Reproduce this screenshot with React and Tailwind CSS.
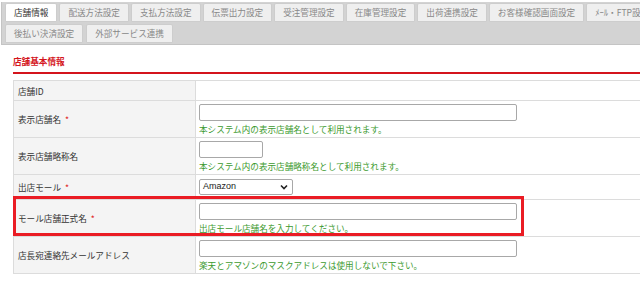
import React from "react";

const topTabs = [
    { label: "店舗情報", active: true },
    { label: "配送方法設定" },
    { label: "支払方法設定" },
    { label: "伝票出力設定" },
    { label: "受注管理設定" },
    { label: "在庫管理設定" },
    { label: "出荷連携設定" },
    { label: "お客様確認画面設定" },
    { label: "ﾒｰﾙ・FTP設定" },
];

const subTabs = ["後払い決済設定", "外部サービス連携"];

const Tab = ({ label, active }) => (
    <div
        className={`shrink-0 whitespace-nowrap px-[8px] h-[19px] leading-[17px] border border-[#cdcdcd] rounded-t-[2px] ${
            active ? "bg-white text-[#333]" : "bg-[#efefef] text-[#888]"
        }`}
    >
        {label}
    </div>
);

const Req = () => <span className="text-[#e02020] ml-[4px]">*</span>;

const Hint = ({ children }) => (
    <div className="text-[#3c9a2e] leading-[12px] mt-[2px] whitespace-nowrap">{children}</div>
);

const TextBox = ({ w }) => (
    <div className={`h-[17px] ${w} border border-[#a8a8a8] rounded-[2px] bg-white`} />
);

export default function App() {
    return (
        <div className="relative w-[640px] h-[281px] overflow-hidden bg-white text-[8.6px] text-[#333] font-['Noto_Sans_CJK_JP','Noto_Sans',sans-serif]">
            {/* ── Tabs ── */}
            <div className="ml-[1px] mt-[2px] border-l border-b border-[#c4c4c4] bg-[#d3d3d3] pl-[3px] pt-px pb-[1px] flex flex-col gap-[2px]">
                <div className="flex gap-[2px] overflow-hidden">
                    {topTabs.map((t) => (
                        <Tab key={t.label} label={t.label} active={t.active} />
                    ))}
                </div>
                <div className="flex gap-[3px]">
                    {subTabs.map((t) => (
                        <Tab key={t} label={t} />
                    ))}
                </div>
            </div>

            {/* ── Section ── */}
            <div className="pl-[13px] mt-[10px]">
                <div className="h-[12px] leading-[12px] font-bold text-[#d4141c]">店舗基本情報</div>
                <div className="mt-[5px] h-[2px] bg-[#d4141c]" />

                <table className="mt-[6px] w-[660px] border-collapse table-fixed">
                    <colgroup>
                        <col className="w-[182px]" />
                        <col />
                    </colgroup>
                    <tbody>
                        <tr className="h-[20px]">
                            <td className="border border-[#dcdcdc] bg-[#f4f4f4] pl-[4px] leading-[12px]">店舗ID</td>
                            <td className="border border-[#dcdcdc]" />
                        </tr>
                        <tr className="h-[37px]">
                            <td className="border border-[#dcdcdc] bg-[#f4f4f4] pl-[4px] leading-[12px]">
                                表示店舗名<Req />
                            </td>
                            <td className="border border-[#dcdcdc] pl-[3px] pt-[3px] pb-[2px] align-top">
                                <TextBox w="w-[318px]" />
                                <Hint>本システム内の表示店舗名として利用されます。</Hint>
                            </td>
                        </tr>
                        <tr className="h-[36px]">
                            <td className="border border-[#dcdcdc] bg-[#f4f4f4] pl-[4px] leading-[12px]">表示店舗略称名</td>
                            <td className="border border-[#dcdcdc] pl-[3px] pt-[3px] pb-[2px] align-top">
                                <TextBox w="w-[64px]" />
                                <Hint>本システム内の表示店舗略称名として利用されます。</Hint>
                            </td>
                        </tr>
                        <tr className="h-[25px]">
                            <td className="border border-[#dcdcdc] bg-[#f4f4f4] pl-[4px] leading-[12px]">
                                出店モール<Req />
                            </td>
                            <td className="border border-[#dcdcdc] pl-[3px]">
                                <div className="w-[94px] h-[16px] border border-[#a8a8a8] rounded-[2px] bg-white flex items-center justify-between pl-[3px] pr-[4px] font-['Liberation_Sans',sans-serif] text-[9px] text-[#222]">
                                    <span>Amazon</span>
                                    <svg width="8" height="6" viewBox="0 0 8 6">
                                        <path d="M1 1.5 L4 4.5 L7 1.5" fill="none" stroke="#222" strokeWidth="1.6" />
                                    </svg>
                                </div>
                            </td>
                        </tr>
                        <tr className="h-[36px]">
                            <td className="border border-[#dcdcdc] bg-[#f4f4f4] pl-[4px] leading-[12px]">
                                モール店舗正式名<Req />
                            </td>
                            <td className="border border-[#dcdcdc] pl-[3px] pt-[3px] pb-[2px] align-top">
                                <TextBox w="w-[318px]" />
                                <Hint>出店モール店舗名を入力してください。</Hint>
                            </td>
                        </tr>
                        <tr className="h-[37px]">
                            <td className="border border-[#dcdcdc] bg-[#f4f4f4] pl-[4px] leading-[12px]">店長宛連絡先メールアドレス</td>
                            <td className="border border-[#dcdcdc] pl-[3px] pt-[3px] pb-[2px] align-top">
                                <TextBox w="w-[318px]" />
                                <Hint>楽天とアマゾンのマスクアドレスは使用しないで下さい。</Hint>
                            </td>
                        </tr>
                    </tbody>
                </table>
            </div>

            {/* annotation highlight */}
            <div className="absolute left-[13px] top-[196px] w-[511px] h-[40px] border-[3px] border-[#ea1c24] pointer-events-none" />
        </div>
    );
}
